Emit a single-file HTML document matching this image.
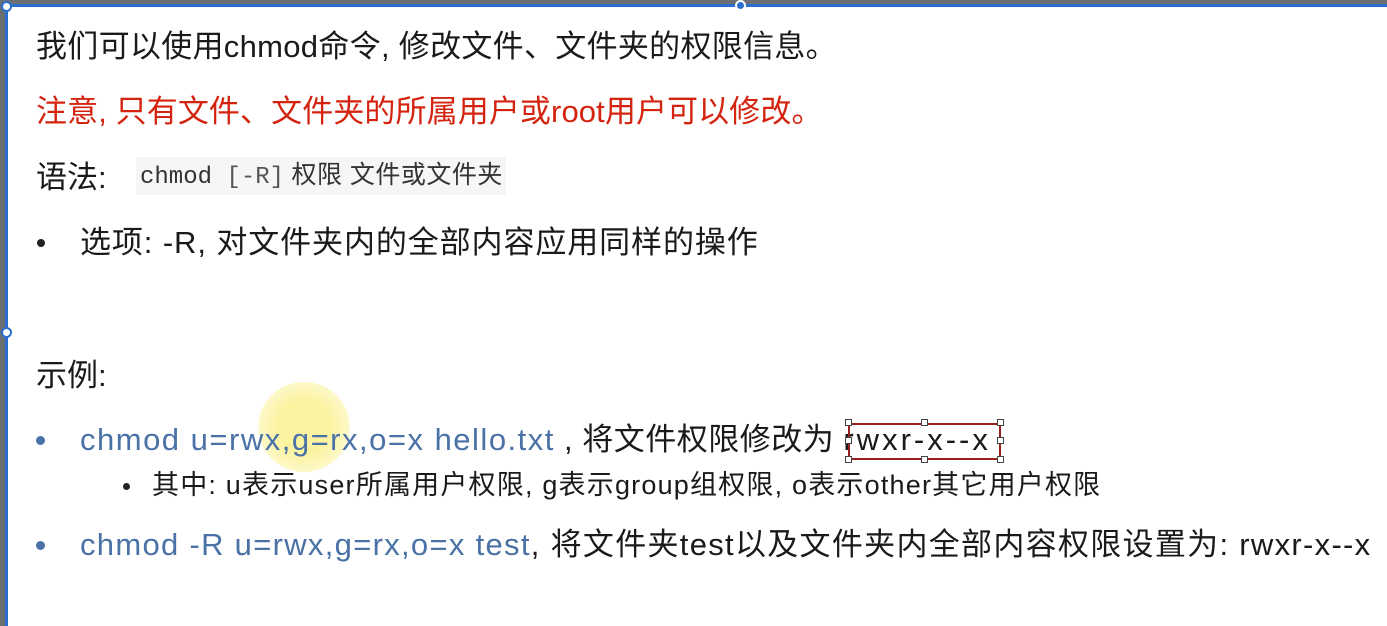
<!DOCTYPE html>
<html><head><meta charset="utf-8"><style>
html,body{margin:0;padding:0;}
body{width:1387px;height:626px;position:relative;overflow:hidden;background:#fff;font-family:"Liberation Sans","Noto Sans CJK SC",sans-serif;color:#1a1a1a;}
.l{position:absolute;white-space:nowrap;line-height:1;}
.b{color:#4a72a6;}
.dot{position:absolute;border-radius:50%;}
.h{position:absolute;width:7px;height:7px;background:#fff;border:1px solid #444;box-sizing:border-box;}
</style></head><body>
<div style="position:absolute;left:0;top:0;width:1387px;height:4px;background:#6b6f73"></div>
<div style="position:absolute;left:0;top:4px;width:1387px;height:3px;background:#2a6fd0"></div>
<div style="position:absolute;left:0;top:0;width:5px;height:626px;background:#6b6f73"></div>
<div style="position:absolute;left:5px;top:4px;width:3px;height:622px;background:#2a6fd0"></div>
<div class="dot" style="left:1px;top:1px;width:7px;height:7px;background:#fff;border:2px solid #2a6fd0"></div>
<div class="dot" style="left:735px;top:0px;width:7px;height:7px;background:#2a6fd0;border:2px solid #fff"></div>
<div class="dot" style="left:1px;top:327px;width:7px;height:7px;background:#fff;border:2px solid #2a6fd0"></div>

<div class="dot" style="left:258px;top:382px;width:92px;height:90px;background:radial-gradient(circle,#fbf3a0 40%,#fdf8c8 70%,rgba(255,255,255,0) 72%)"></div>

<div class="l" style="left:36px;top:31px;font-size:31px;letter-spacing:0.3px">我们可以使用chmod命令, 修改文件、文件夹的权限信息。</div>
<div class="l" style="left:36px;top:96px;font-size:31px;color:#d4230f;letter-spacing:0.1px">注意, 只有文件、文件夹的所属用户或root用户可以修改。</div>
<div class="l" style="left:36px;top:162px;font-size:31px">语法:</div>
<div style="position:absolute;left:136px;top:157px;width:370px;height:38px;background:#f6f6f6"></div>
<div class="l" style="left:140px;top:163px;font-size:25px;color:#333;letter-spacing:0.5px"><span style="font-family:'Liberation Mono','DejaVu Sans Mono',monospace;font-size:24px;letter-spacing:0">chmod <span style="color:#555">[-R]</span></span> 权限 文件或文件夹</div>

<div class="dot" style="left:37px;top:239px;width:8px;height:8px;background:#222"></div>
<div class="l" style="left:80px;top:227px;font-size:31px;letter-spacing:0.9px">选项: -R, 对文件夹内的全部内容应用同样的操作</div>

<div class="l" style="left:36px;top:360px;font-size:31px">示例:</div>

<div class="dot" style="left:36px;top:436px;width:9px;height:9px;background:#4a72a6"></div>
<div class="l" style="left:80px;top:424px;font-size:31px"><span class="b" style="letter-spacing:1.5px">chmod u=rwx,g=rx,o=x hello.txt</span><span style="letter-spacing:0.5px"> , 将文件权限修改为 </span><span style="letter-spacing:3px">rwxr-x--x</span></div>
<div style="position:absolute;left:848px;top:423px;width:153px;height:37px;border:2px solid #9a2020;box-sizing:border-box"></div>
<div class="h" style="left:845px;top:419px"></div><div class="h" style="left:921px;top:419px"></div><div class="h" style="left:997px;top:419px"></div>
<div class="h" style="left:845px;top:437px"></div><div class="h" style="left:997px;top:437px"></div>
<div class="h" style="left:845px;top:456px"></div><div class="h" style="left:921px;top:456px"></div><div class="h" style="left:997px;top:456px"></div>

<div class="dot" style="left:123px;top:483px;width:7px;height:7px;background:#222"></div>
<div class="l" style="left:152px;top:472px;font-size:27px;letter-spacing:1.2px">其中: u表示user所属用户权限, g表示group组权限, o表示other其它用户权限</div>

<div class="dot" style="left:36px;top:541px;width:9px;height:9px;background:#4a72a6"></div>
<div class="l" style="left:80px;top:529px;font-size:31px"><span class="b" style="letter-spacing:1.3px">chmod -R u=rwx,g=rx,o=x test</span><span style="letter-spacing:1.3px">, 将文件夹test以及文件夹内全部内容权限设置为: rwxr-x--x</span></div>
</body></html>
